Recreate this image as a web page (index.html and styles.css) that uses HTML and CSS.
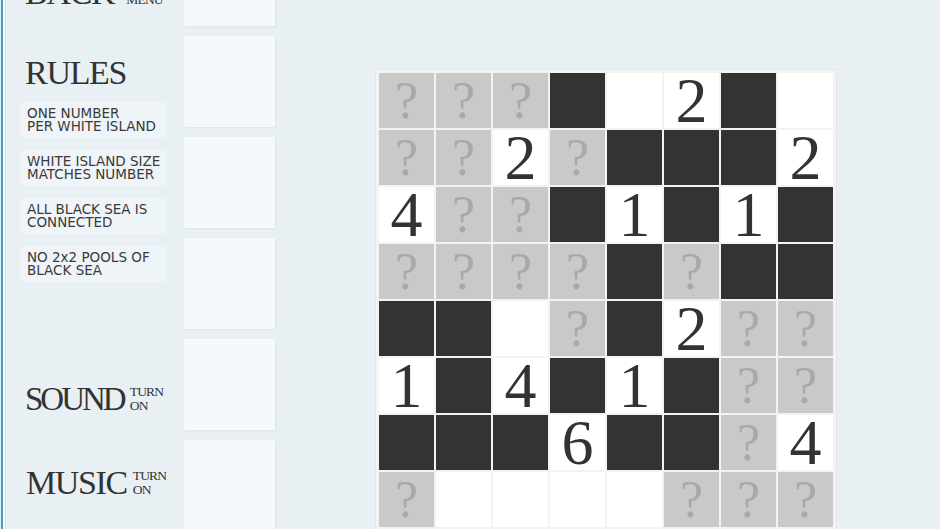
FILE: index.html
```html
<!DOCTYPE html>
<html>
<head>
<meta charset="utf-8">
<link rel="stylesheet" href="styles.css">
</head>
<body>
<div class="app">
  <aside class="sidebar">
    <div class="heading back"><span class="big">BACK</span><span class="small"><span>TO</span><span>MENU</span></span></div>
    <div class="heading rules-title"><span class="big">RULES</span></div>
    <ul class="rules">
      <li>ONE NUMBER<br>PER WHITE ISLAND</li>
      <li>WHITE ISLAND SIZE<br>MATCHES NUMBER</li>
      <li>ALL BLACK SEA IS<br>CONNECTED</li>
      <li>NO 2x2 POOLS OF<br>BLACK SEA</li>
    </ul>
    <div class="heading sound"><span class="big">SOUND</span><span class="small"><span>TURN</span><span>ON</span></span></div>
    <div class="heading music"><span class="big">MUSIC</span><span class="small"><span>TURN</span><span>ON</span></span></div>
  </aside>
  <div class="tiles">
    <div class="tile"></div><div class="tile"></div><div class="tile"></div>
    <div class="tile"></div><div class="tile"></div><div class="tile"></div>
  </div>
  <main class="main">
    <div class="board">
      <div class="cell u">?</div><div class="cell u">?</div><div class="cell u">?</div><div class="cell b"></div><div class="cell w"></div><div class="cell w">2</div><div class="cell b"></div><div class="cell w"></div>
      <div class="cell u">?</div><div class="cell u">?</div><div class="cell w">2</div><div class="cell u">?</div><div class="cell b"></div><div class="cell b"></div><div class="cell b"></div><div class="cell w">2</div>
      <div class="cell w">4</div><div class="cell u">?</div><div class="cell u">?</div><div class="cell b"></div><div class="cell w">1</div><div class="cell b"></div><div class="cell w">1</div><div class="cell b"></div>
      <div class="cell u">?</div><div class="cell u">?</div><div class="cell u">?</div><div class="cell u">?</div><div class="cell b"></div><div class="cell u">?</div><div class="cell b"></div><div class="cell b"></div>
      <div class="cell b"></div><div class="cell b"></div><div class="cell w"></div><div class="cell u">?</div><div class="cell b"></div><div class="cell w">2</div><div class="cell u">?</div><div class="cell u">?</div>
      <div class="cell w">1</div><div class="cell b"></div><div class="cell w">4</div><div class="cell b"></div><div class="cell w">1</div><div class="cell b"></div><div class="cell u">?</div><div class="cell u">?</div>
      <div class="cell b"></div><div class="cell b"></div><div class="cell b"></div><div class="cell w">6</div><div class="cell b"></div><div class="cell b"></div><div class="cell u">?</div><div class="cell w">4</div>
      <div class="cell u">?</div><div class="cell w"></div><div class="cell w"></div><div class="cell w"></div><div class="cell w"></div><div class="cell u">?</div><div class="cell u">?</div><div class="cell u">?</div>
    </div>
  </main>
</div>
</body>
</html>
```

FILE: styles.css
```css
html, body {
  margin: 0;
  padding: 0;
  height: 529px;
  overflow: hidden;
  background: #e8f0f4;
}

.app {
  display: flex;
  margin-top: -70px;
  border-left: 1px solid #e0ecf1;
}

.sidebar {
  width: 159px;
  border-left: 2px solid #4a9ec0;
  box-shadow: inset 2px 0 0 #f3f8fa, inset 3px 0 0 #cfe4ec;
  padding: 46px 0 0 22px;
  display: flex;
  flex-direction: column;
  color: #333;
}

.heading {
  display: flex;
  align-items: flex-end;
  font-family: "Liberation Serif", serif;
  height: 34px;
}

.big {
  font-size: 34px;
  line-height: 34px;
  letter-spacing: -1.3px;
}

.sound .big {
  font-size: 33px;
  letter-spacing: -3px;
}

.music .big {
  letter-spacing: -1.4px;
  margin-left: 1px;
}

.small {
  display: flex;
  flex-direction: column;
  font-size: 13.5px;
  line-height: 14px;
  letter-spacing: -0.8px;
  padding: 0 0 3px 6px;
}

.back .small {
  padding-left: 12px;
}

.rules-title { margin-top: 46px; }

.rules {
  list-style: none;
  margin: 12px 0 0 -5px;
  padding: 0;
  display: flex;
  flex-direction: column;
  gap: 12px;
}

.rules li {
  width: 132px;
  height: 27px;
  padding: 4.5px 7px 4.5px 7px;
  background: #eef4f7;
  font-family: "DejaVu Sans", sans-serif;
  font-size: 13.5px;
  line-height: 13.5px;
  color: #3a3a3a;
  white-space: nowrap;
}

.sound { margin-top: 100px; }
.music { margin-top: 50px; }

.tiles {
  width: 92px;
  padding-top: 5px;
  display: flex;
  flex-direction: column;
  gap: 10px;
}

.tile {
  width: 91px;
  height: 91px;
  background: #f6f9fb;
  box-shadow: 1px 1px 2px rgba(0, 0, 0, 0.05);
}

.main {
  flex: 1;
  display: flex;
  justify-content: center;
  padding-top: 139px;
  padding-right: 4px;
}

.board {
  display: grid;
  grid-template-columns: repeat(8, 55px);
  grid-auto-rows: 55px;
  gap: 2px;
  padding: 3px;
  background: #f3f3f3;
  border: 1px solid #e4e6e8;
  align-self: flex-start;
}

.cell {
  display: flex;
  align-items: center;
  justify-content: center;
  font-family: "Liberation Serif", serif;
  line-height: 55px;
}

.cell.w {
  background: #ffffff;
  color: #333;
  font-size: 64px;
}

.cell.b {
  background: #333333;
}

.cell.u {
  background: #c9c9c9;
  color: #a9a9a9;
  font-size: 52px;
}
```
